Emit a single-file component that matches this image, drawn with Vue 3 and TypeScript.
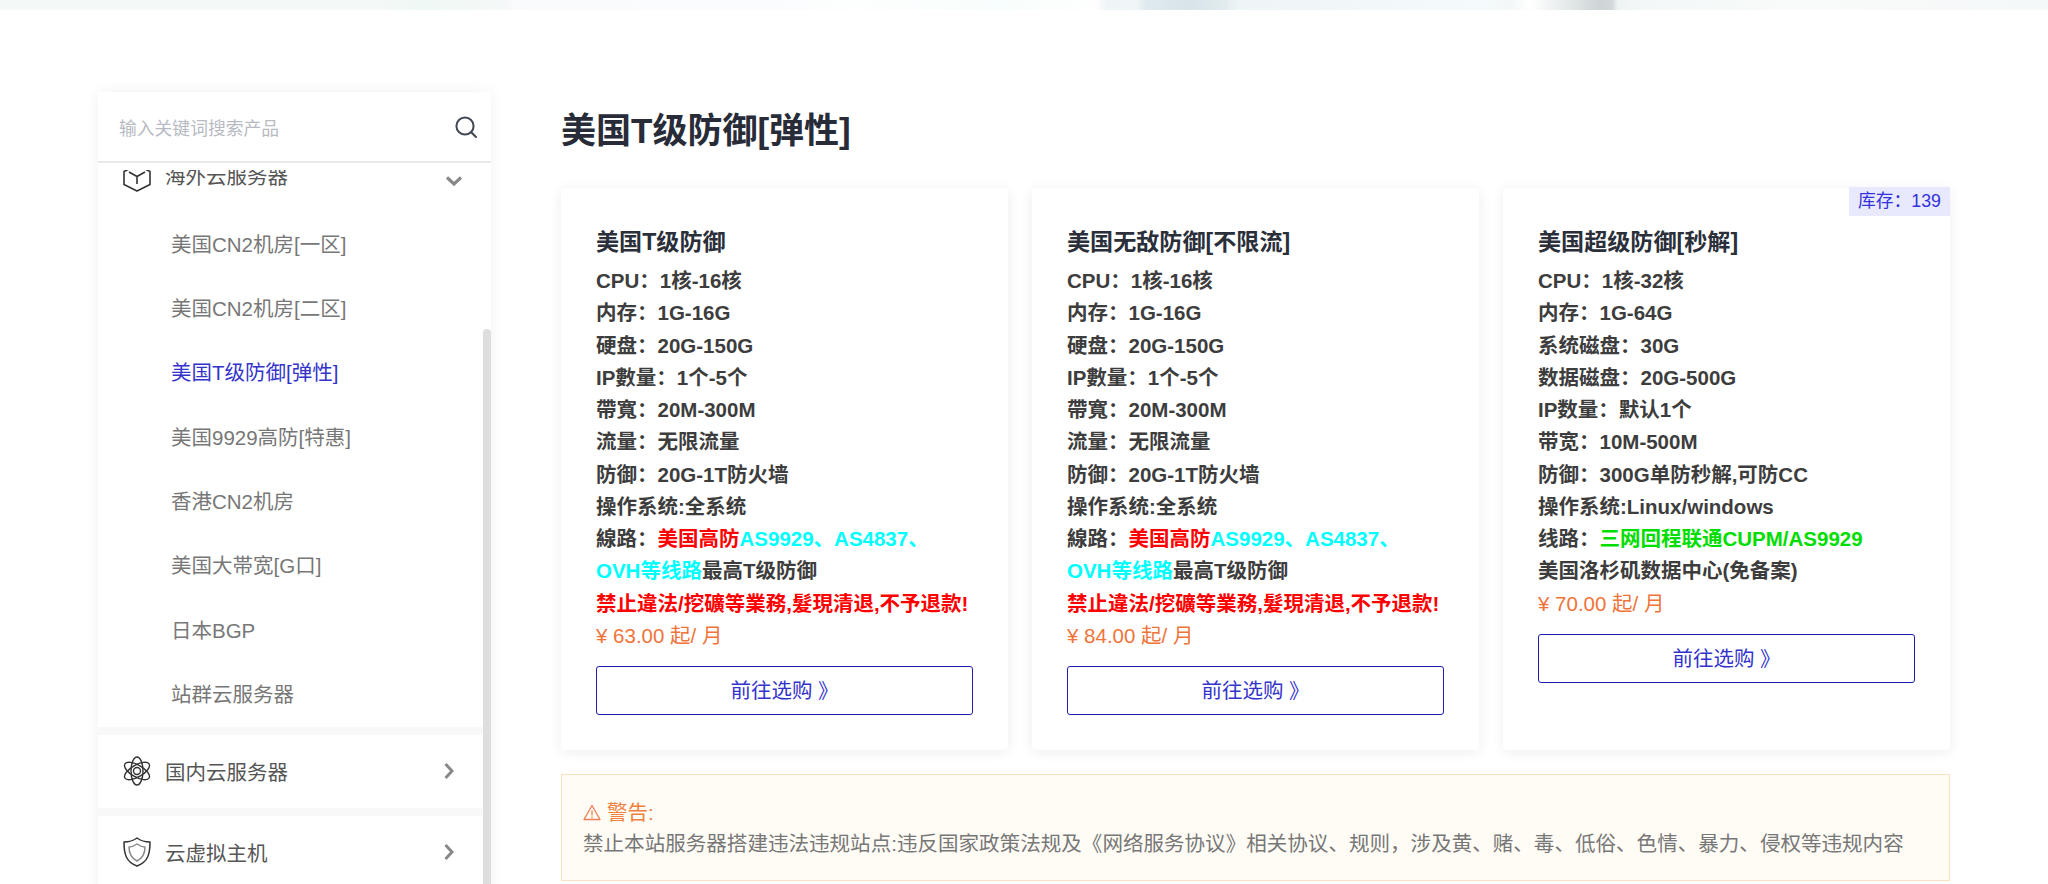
<script setup lang="ts">
interface Seg { t: string; c?: string; br?: boolean }
interface Card { title: string; lines: Seg[][]; price: string; stock?: string }

const plain = (...rows: string[]): Seg[][] => rows.map((t) => [{ t }])

const ddos: Seg[][] = [
  [
    { t: '線路：' },
    { t: '美国高防', c: 'red' },
    { t: 'AS9929、AS4837、', c: 'cyan', br: true },
    { t: 'OVH等线路', c: 'cyan' },
    { t: '最高T级防御' },
  ],
  [{ t: '禁止違法/挖礦等業務,髮現清退,不予退款!', c: 'red' }],
]

const base = plain(
  'CPU：1核-16核',
  '内存：1G-16G',
  '硬盘：20G-150G',
  'IP數量：1个-5个',
  '帶寬：20M-300M',
  '流量：无限流量',
  '防御：20G-1T防火墙',
  '操作系统:全系统',
)

const cards: Card[] = [
  { title: '美国T级防御', lines: [...base, ...ddos], price: '¥ 63.00 起/ 月' },
  { title: '美国无敌防御[不限流]', lines: [...base, ...ddos], price: '¥ 84.00 起/ 月' },
  {
    title: '美国超级防御[秒解]',
    stock: '库存：139',
    price: '¥ 70.00 起/ 月',
    lines: [
      ...plain(
        'CPU：1核-32核',
        '内存：1G-64G',
        '系统磁盘：30G',
        '数据磁盘：20G-500G',
        'IP数量：默认1个',
        '带宽：10M-500M',
        '防御：300G单防秒解,可防CC',
        '操作系统:Linux/windows',
      ),
      [{ t: '线路：' }, { t: '三网回程联通CUPM/AS9929', c: 'green' }],
      [{ t: '美国洛杉矶数据中心(免备案)' }],
    ],
  },
]

const subs = ['美国CN2机房[一区]', '美国CN2机房[二区]', '美国T级防御[弹性]', '美国9929高防[特惠]', '香港CN2机房', '美国大帯宽[G口]', '日本BGP', '站群云服务器']
const activeSub = '美国T级防御[弹性]'
</script>

<template>
  <div class="page">
    <div class="banner"></div>
    <div class="content">
      <aside class="sidebar">
        <div class="search">
          <span class="placeholder">输入关键词搜索产品</span>
          <svg class="search-icon" viewBox="0 0 24 24" width="24" height="24" fill="none" stroke="#3f4754" stroke-width="2">
            <circle cx="11" cy="11" r="8.6" />
            <path d="M17.2 17.2 L22 22" stroke-linecap="round" />
          </svg>
        </div>
        <div class="menu">
          <div class="menu-inner">
            <div class="group">
              <div class="head">
                <svg class="icon hex" viewBox="0 0 28 28" width="28" height="28" fill="none" stroke="#333" stroke-width="1.6" stroke-linejoin="round">
                  <path d="M14 1 L27 7.5 V20.5 L14 27 L1 20.5 V7.5 Z" />
                  <path d="M6 8 L14 12.5 L22 8 M14 12.5 V20" />
                </svg>
                <span class="head-text">海外云服务器</span>
                <svg class="chev-down" viewBox="0 0 16 10" width="16" height="10" fill="none" stroke="#888" stroke-width="3.2">
                  <path d="M1 1.5 L8 8 L15 1.5" />
                </svg>
              </div>
              <ul class="subs">
                <li v-for="s in subs" :key="s" :class="['sub', { active: s === activeSub }]">{{ s }}</li>
              </ul>
            </div>
            <div class="group">
              <div class="head">
                <svg class="icon" viewBox="0 0 28 30" width="28" height="30" fill="none" stroke="#333" stroke-width="1.4">
                  <ellipse cx="14" cy="15" rx="6" ry="14" />
                  <ellipse cx="14" cy="15" rx="6" ry="14" transform="rotate(60 14 15)" />
                  <ellipse cx="14" cy="15" rx="6" ry="14" transform="rotate(-60 14 15)" />
                  <circle cx="14" cy="15" r="3.5" />
                </svg>
                <span class="head-text">国内云服务器</span>
                <svg class="chev-right" viewBox="0 0 10 16" width="10" height="16" fill="none" stroke="#888" stroke-width="3">
                  <path d="M1.5 1 L8 8 L1.5 15" />
                </svg>
              </div>
            </div>
            <div class="group">
              <div class="head">
                <svg class="icon" viewBox="0 0 28 30" width="28" height="30" fill="none" stroke="#333" stroke-width="1.5" stroke-linejoin="round">
                  <path d="M14 1 C18 4 22 5 27 5 C27 17 25 25 14 29 C3 25 1 17 1 5 C6 5 10 4 14 1 Z" />
                  <path stroke="#888" d="M14 7 C17 9 19 10 22 10 C22 17 20 21 14 24 C8 21 6 17 6 10 C9 10 11 9 14 7 Z" />
                </svg>
                <span class="head-text">云虚拟主机</span>
                <svg class="chev-right" viewBox="0 0 10 16" width="10" height="16" fill="none" stroke="#888" stroke-width="3">
                  <path d="M1.5 1 L8 8 L1.5 15" />
                </svg>
              </div>
            </div>
          </div>
          <div class="scrollbar"></div>
        </div>
      </aside>

      <main class="main">
        <h1 class="title">美国T级防御[弹性]</h1>
        <div class="cards">
          <article v-for="card in cards" :key="card.title" class="card">
            <span v-if="card.stock" class="stock">{{ card.stock }}</span>
            <h2 class="card-title">{{ card.title }}</h2>
            <p v-for="(line, i) in card.lines" :key="i" class="line">
              <template v-for="(seg, j) in line" :key="j">
                <span :class="seg.c">{{ seg.t }}</span><br v-if="seg.br" />
              </template>
            </p>
            <p class="price">{{ card.price }}</p>
            <a class="buy">前往选购 》</a>
          </article>
        </div>
        <section class="alert">
          <div class="alert-head">
            <svg viewBox="0 0 18 17" width="18" height="17" fill="none" stroke="#ef7d52" stroke-width="1.3" stroke-linejoin="round">
              <path d="M9 1.5 L17 15.5 H1 Z" />
              <path d="M9 6.5 V11.5 M9 12.6 V14" />
            </svg>
            <span>警告:</span>
          </div>
          <div class="alert-body">禁止本站服务器搭建违法违规站点:违反国家政策法规及《网络服务协议》相关协议、规则，涉及黄、赌、毒、低俗、色情、暴力、侵权等违规内容</div>
        </section>
      </main>
    </div>
  </div>
</template>

<style>
html, body { margin: 0; background: #fff; overflow: hidden; }
</style>

<style scoped>
.page {
  height: 884px;
  overflow: hidden;
  font-family: "Liberation Sans", "Noto Sans CJK SC", sans-serif;
  font-size: 20.5px;
  background: #fff;
}
.banner {
  height: 10px;
  background: linear-gradient(90deg,
    #f4f8f7 0, #f4f8f7 380px, #eff8f5 420px, #f5f8f8 505px, #fafbfc 515px, #fbfcfd 760px, #fdfefe 860px, #f8fefd 1000px, #fefefe 1095px,
    #eef5f7 1108px, #f0f6f8 1136px, #e0eaee 1146px, #d8e4e9 1190px, #e2ecef 1226px, #eef5f7 1238px,
    #f0f6f8 1300px, #f5fbfc 1480px, #f3f7f8 1510px, #ffffff 1530px, #eaeeef 1560px, #cdd4d5 1600px, #d3d9da 1612px, #eef3f3 1618px, #f3f7f7 1640px,
    #f8fbfa 1800px, #f5f8f8 2048px);
}
.content {
  display: flex;
  gap: 70px;
  padding: 82px 98px 0;
}
.sidebar {
  width: 393px;
  flex: none;
  height: 860px;
  background: #fff;
  box-shadow: 0 0 14px rgba(0, 0, 0, 0.06);
  display: flex;
  flex-direction: column;
}
.search {
  height: 68px;
  border-bottom: 2px solid #e9e9e9;
  padding: 1px 13px 0 21px;
  box-sizing: content-box;
  margin-bottom: -1px;
  display: flex;
  align-items: center;
  justify-content: space-between;
  flex: none;
}
.placeholder {
  font-size: 17.8px;
  color: #b7bac2;
}
.menu {
  position: relative;
  flex: 1;
  margin-top: 8px;
  overflow: hidden;
}
.menu-inner {
  margin-top: -32px;
  margin-right: 8px;
  display: flex;
  flex-direction: column;
  gap: 8px;
  background: #f8f8f8;
}
.group { background: #fff; }
.head {
  height: 73px;
  box-sizing: border-box;
  display: flex;
  align-items: center;
  padding-left: 25px;
  color: #555;
}
.group + .group .head { padding-bottom: 1px; }
.icon { flex: none; }
.hex { margin-top: 6px; }
.head-text { margin-left: 14px; flex: 1; }
.chev-down { margin: 12px 21px 0 0; }
.chev-right { margin-right: 29px; }
.subs {
  list-style: none;
  margin: 1.5px 0 -1px;
  padding: 0;
}
.sub {
  height: 64.4px;
  line-height: 64.4px;
  padding-left: 73px;
  color: #777;
}
.sub.active { color: #3333cc; }
.scrollbar {
  position: absolute;
  right: 0;
  top: 159px;
  bottom: 0;
  width: 8px;
  background: #dedede;
  border-radius: 4px 4px 0 0;
}
.main {
  flex: 1;
  min-width: 0;
  padding-top: 9px;
}
.title {
  margin: 0 0 27px;
  font-size: 35px;
  line-height: 60px;
  font-weight: 700;
  color: #272c38;
}
.cards {
  display: flex;
  gap: 24px;
}
.card {
  position: relative;
  flex: 1;
  min-width: 0;
  box-sizing: border-box;
  padding: 35px;
  background: #fff;
  border-radius: 4px;
  box-shadow: 0 2px 14px rgba(0, 0, 0, 0.07);
}
.stock {
  position: absolute;
  top: -1px;
  right: 0;
  height: 29px;
  line-height: 29px;
  padding: 0 9px;
  background: #e9e9fd;
  color: #3333dd;
  font-size: 17.8px;
}
.card-title {
  margin: 0 0 4px;
  font-size: 23.1px;
  line-height: 38px;
  font-weight: 700;
  color: #2a2f3a;
}
.line {
  margin: 0;
  line-height: 32.25px;
  font-weight: 700;
  color: #3d3d3d;
}
.red { color: #ff0000; }
.cyan { color: #00ffff; }
.green { color: #00dd00; }
.price {
  margin: 0 0 14px;
  line-height: 32.25px;
  color: #f0743a;
}
.buy {
  display: block;
  box-sizing: border-box;
  height: 49px;
  line-height: 47px;
  text-align: center;
  border: 1px solid #1c1cb4;
  border-radius: 3px;
  color: #3333cc;
}
.alert {
  margin-top: 24px;
  box-sizing: border-box;
  height: 107px;
  padding: 22px 21px;
  background: #fffcf6;
  border: 1px solid #f9e2bd;
  line-height: 31px;
}
.alert-head {
  display: flex;
  align-items: center;
  gap: 6px;
  color: #f08040;
}
.alert-body {
  color: #777;
  font-size: 20.55px;
  white-space: nowrap;
}
</style>
